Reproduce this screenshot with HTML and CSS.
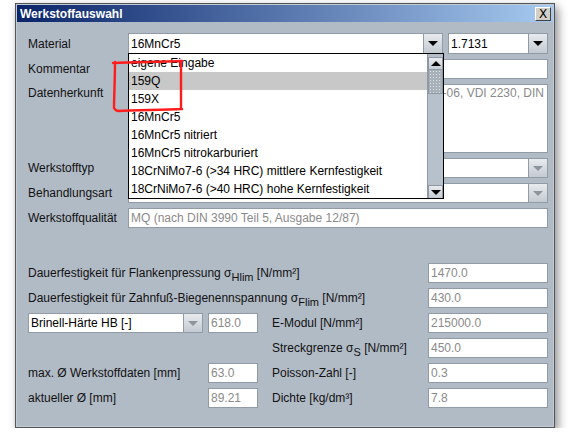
FILE: index.html
```html
<!DOCTYPE html>
<html>
<head>
<meta charset="utf-8">
<title>Werkstoffauswahl</title>
<link rel="stylesheet" href="styles.css">
</head>
<body>
<div class="window">
  <div class="titlebar">
    <span class="title">Werkstoffauswahl</span>
    <span class="close">X</span>
  </div>
  <div class="content">
    <div class="top">
      <span class="label">Material</span>
      <div class="pair">
        <div class="combo material-combo">
          <span class="ctext">16MnCr5</span>
          <span class="arrow"><i class="tri"></i></span>
          <div class="popup">
            <div class="list">
              <div class="item">eigene Eingabe</div>
              <div class="item sel">159Q</div>
              <div class="item">159X</div>
              <div class="item">16MnCr5</div>
              <div class="item">16MnCr5 nitriert</div>
              <div class="item">16MnCr5 nitrokarburiert</div>
              <div class="item">18CrNiMo7-6 (&gt;34 HRC) mittlere Kernfestigkeit</div>
              <div class="item">18CrNiMo7-6 (&gt;40 HRC) hohe Kernfestigkeit</div>
            </div>
            <div class="scrollbar">
              <div class="sbtn up"><i class="tri-up"></i></div>
              <div class="thumb"></div>
              <div class="track"></div>
              <div class="sbtn down"><i class="tri"></i></div>
            </div>
          </div>
        </div>
        <div class="combo number-combo">
          <span class="ctext">1.7131</span>
          <span class="arrow"><i class="tri"></i></span>
        </div>
      </div>

      <span class="label">Kommentar</span>
      <div class="field"></div>

      <span class="label label-top">Datenherkunft</span>
      <div class="field area"><span class="area-text">DIN 3990 Teil 5, ISO 6336-5:2003-06, VDI 2230, DIN</span></div>

      <span class="label">Werkstofftyp</span>
      <div class="combo">
        <span class="ctext"></span>
        <span class="arrow"><i class="tri off"></i></span>
      </div>

      <span class="label">Behandlungsart</span>
      <div class="combo">
        <span class="ctext"></span>
        <span class="arrow"><i class="tri off"></i></span>
      </div>

      <span class="label">Werkstoffqualität</span>
      <div class="field">MQ (nach DIN 3990 Teil 5, Ausgabe 12/87)</div>
    </div>

    <div class="bottom">
      <span class="label span3">Dauerfestigkeit für Flankenpressung σ<sub>Hlim</sub> [N/mm²]</span>
      <div class="field c4">1470.0</div>

      <span class="label span3">Dauerfestigkeit für Zahnfuß-Biegenennspannung σ<sub>Flim</sub> [N/mm²]</span>
      <div class="field c4">430.0</div>

      <div class="combo">
        <span class="ctext">Brinell-Härte HB [-]</span>
        <span class="arrow"><i class="tri off"></i></span>
      </div>
      <div class="field">618.0</div>
      <span class="label c3">E-Modul [N/mm²]</span>
      <div class="field c4">215000.0</div>

      <span class="label c3">Streckgrenze σ<sub>S</sub> [N/mm²]</span>
      <div class="field c4">450.0</div>

      <span class="label">max. Ø Werkstoffdaten [mm]</span>
      <div class="field">63.0</div>
      <span class="label c3">Poisson-Zahl [-]</span>
      <div class="field c4">0.3</div>

      <span class="label">aktueller Ø [mm]</span>
      <div class="field">89.21</div>
      <span class="label c3">Dichte [kg/dm³]</span>
      <div class="field c4">7.8</div>
    </div>
  </div>
</div>
<svg class="mark" width="570" height="442" viewBox="0 0 570 442">
  <path d="M113 63 C 135 62, 160 62, 182 61 M181 61 C 181 75, 181 95, 181 108 M182 109 C 160 110, 135 110, 118 111 M115 62 C 115 80, 114 98, 114 108 C 115 110, 116 111, 119 111" fill="none" stroke="#ff1c1c" stroke-width="2.4" stroke-linecap="round"/>
</svg>
</body>
</html>
```

FILE: styles.css
```css
* { box-sizing: border-box; }

html, body {
  margin: 0;
  padding: 0;
  background: #ffffff;
}

body {
  font-family: "Liberation Sans", Arial, sans-serif;
  font-size: 12px;
  color: #111111;
}

.window {
  margin: 3px 0 0 15px;
  width: 540px;
  height: 425px;
  border: 1px solid #50555a;
  padding: 1px;
  background: #c4cbd2;
  box-shadow: 3px 4px 9px rgba(0, 0, 0, 0.45);
}

.titlebar {
  height: 17px;
  background: linear-gradient(to right, #0a246a, #a6caf0);
  display: flex;
  align-items: center;
  justify-content: space-between;
  padding: 0 2px 0 3px;
}

.title {
  color: #ffffff;
  font-weight: bold;
  font-size: 12px;
}

.close {
  width: 16px;
  height: 14px;
  background: #d4d0c8;
  border: 1px solid;
  border-color: #ffffff #404040 #404040 #ffffff;
  font-size: 12px;
  line-height: 12px;
  text-align: center;
  color: #000;
  font-family: "DejaVu Sans", sans-serif;
}

.content {
  height: 404px;
  background: #b1bbc6;
  padding: 11px 0 0 11px;
}

.top {
  display: grid;
  width: 520px;
  grid-template-columns: 100px 420px;
  grid-template-rows: 21px 20px 69px 20px 20px 20px;
  row-gap: 5px;
}

.label {
  align-self: center;
  white-space: nowrap;
  color: #111;
}

.label-top {
  align-self: start;
  padding-top: 2px;
}

.pair {
  display: flex;
  gap: 5px;
}

.field {
  background: #ffffff;
  border: 1px solid #909ba6;
  height: 100%;
  padding: 0 2px;
  display: flex;
  align-items: center;
  color: #8a8a8a;
  white-space: nowrap;
  overflow: hidden;
}

.area {
  align-items: flex-start;
  justify-content: flex-end;
  padding: 1px 3px 0 2px;
}

.area-text {
  flex: none;
}

.combo {
  display: flex;
  background: #ffffff;
  border: 1px solid #909ba6;
  height: 100%;
}

.material-combo {
  position: relative;
  width: 315px;
}

.number-combo {
  width: 100px;
}

.ctext {
  flex: 1;
  padding-left: 2px;
  display: flex;
  align-items: center;
  color: #000;
  white-space: nowrap;
  overflow: hidden;
}

.arrow {
  width: 19px;
  border-left: 1px solid #909ba6;
  background: linear-gradient(#e8ebee, #c3cad1);
  display: flex;
  align-items: center;
  justify-content: center;
}

.tri {
  width: 0;
  height: 0;
  border-left: 5px solid transparent;
  border-right: 5px solid transparent;
  border-top: 5px solid #000;
}

.tri.off {
  border-top-color: #8c949c;
}

.tri-up {
  width: 0;
  height: 0;
  border-left: 5px solid transparent;
  border-right: 5px solid transparent;
  border-bottom: 5px solid #000;
}

.popup {
  position: absolute;
  left: -1px;
  top: 19px;
  width: 316px;
  border: 1px solid #000;
  background: #fff;
  display: flex;
  z-index: 5;
}

.list {
  flex: 1;
}

.item {
  height: 18px;
  line-height: 18px;
  padding-left: 2px;
  color: #000;
  white-space: nowrap;
  overflow: hidden;
}

.item.sel {
  background: #c8c8c8;
}

.scrollbar {
  width: 16px;
  background: #b4bec8;
  border-left: 1px solid #8e99a4;
  display: flex;
  flex-direction: column;
  padding-top: 3px;
}

.sbtn {
  height: 13px;
  background: linear-gradient(#e8ebee, #c3cad1);
  border: 1px solid #8e99a4;
  display: flex;
  align-items: center;
  justify-content: center;
}

.down {
  border-bottom: none;
}

.thumb {
  height: 24px;
  background-color: #a8b1ba;
  background-image: radial-gradient(#dde2e7 0.8px, transparent 1px);
  background-size: 3px 3px;
  border: 1px solid #8e99a4;
  border-top: none;
}

.track {
  flex: 1;
  background: #b7c1cb;
}

.bottom {
  display: grid;
  width: 520px;
  margin-top: 35px;
  grid-template-columns: 175px 50px 160px 120px;
  grid-template-rows: repeat(6, 20px);
  column-gap: 5px;
  row-gap: 5px;
}

.span3 {
  grid-column: 1 / 4;
}

.c3 {
  grid-column: 3;
  padding-left: 9px;
}

.c4 {
  grid-column: 4;
}

sub {
  font-size: 11px;
  vertical-align: -4px;
  line-height: 0;
}

.mark {
  position: absolute;
  left: 0;
  top: 0;
  z-index: 20;
  pointer-events: none;
}
```
